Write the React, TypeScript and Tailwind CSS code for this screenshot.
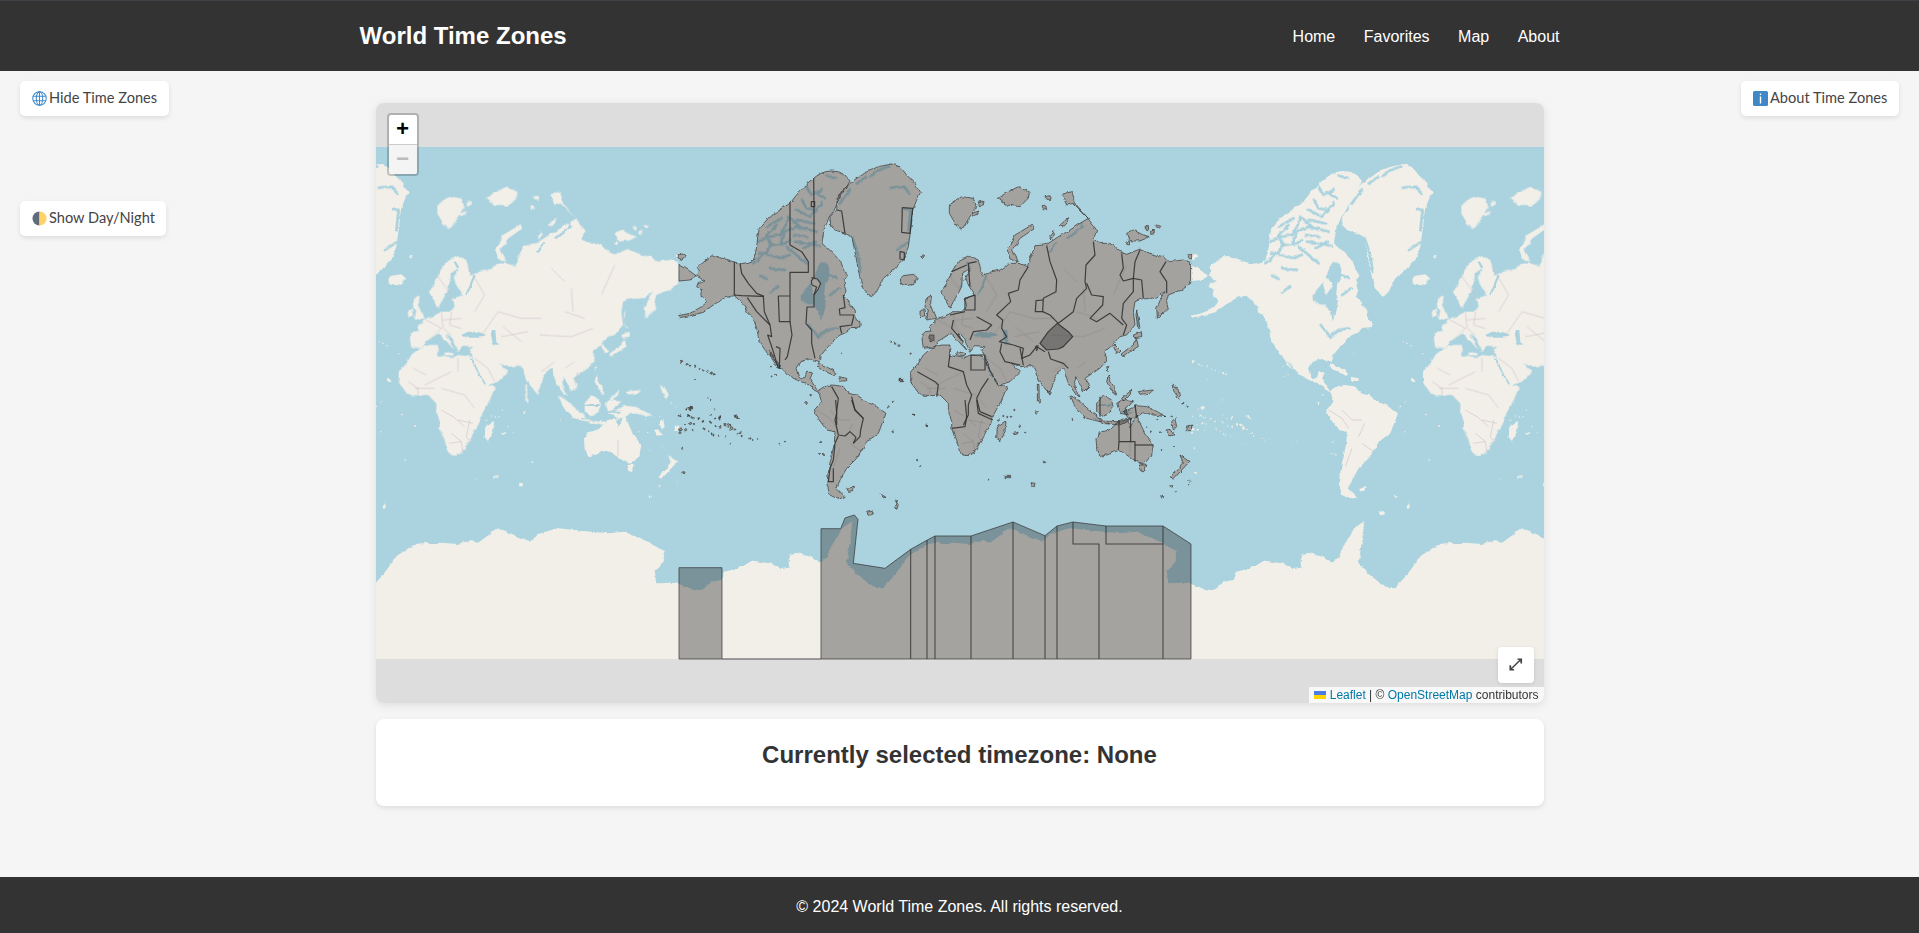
const T = {
  A: "translate(-9 8) scale(0.33333)",
  B: "translate(241 8) scale(0.33333)",
  C: "translate(-9 253) scale(0.33333)",
  D: "translate(241 253) scale(0.33333)",
};

const SHAPES_A = [
  "M82 338L105 318L128 300L148 308L170 313L192 320L215 326L235 322L250 316L258 290L262 255L268 220L285 200L310 178L340 158L360 145L378 122L392 105L412 85L432 68L455 54L480 48L505 50L525 60L540 78L528 100L512 122L500 150L490 170L478 185L470 205L462 225L456 262L472 278L492 298L512 320L520 340L533 360L522 378L528 408L522 425L540 445L555 465L558 490L570 500L570 516L545 518L530 532L510 540L495 552L470 580L450 605L448 622L440 618L420 612L390 620L378 640L388 668L405 668L410 652L428 652L420 672L438 700L445 708L470 692L490 690L520 695L535 715L560 720L590 740L620 755L648 775L625 835L590 860L560 910L530 940L510 975L500 1000L525 1025L505 1033L480 1020L470 985L478 935L493 865L495 830L470 825L440 785L433 765L455 740L445 712L432 705L412 686L385 676L355 660L335 640L312 610L292 595L268 560L260 520L250 490L232 470L218 445L193 422L165 428L130 450L100 472L70 480L28 488L25 482L60 475L95 455L112 440L92 420L95 405L80 395L85 382L105 378L78 362L90 350Z",
  "M540 85L580 55L625 35L665 27L690 35L710 60L735 85L752 112L740 135L728 165L725 200L720 240L715 275L700 315L670 345L640 370L620 410L605 425L590 415L575 390L565 345L555 290L545 245L525 235L495 225L482 215L480 185L500 165L502 130L520 105Z",
  "M27 328L55 345L78 362L60 375L27 378Z",
  "M688 372L700 362L730 358L742 368L735 385L712 392L692 388Z",
  "M25 300L40 297L46 304L35 313L25 310Z",
  "M445 625L470 635L500 655L490 660L465 650L445 635Z",
  "M505 665L530 670L530 678L510 678Z",
  "M300 585L310 605L330 640L318 630L302 605Z",
  "M752 305L764 302L760 312Z",
  "M688 670L698 670L698 680L688 680Z",
];

const SHAPES_B = [
  "M5 545L12 530L35 528L30 512L55 490L85 478L100 470L125 470L140 455L135 430L165 420L150 395L135 375L150 340L128 355L125 395L115 415L100 440L90 460L70 425L63 410L80 385L95 350L115 320L150 303L175 315L180 335L190 360L215 350L240 345L255 335L265 325L300 325L322 335L330 310L345 272L375 270L385 265L415 245L450 225L480 205L505 190L485 170L460 145L440 150L425 118L455 110L470 150L500 185L530 225L522 250L540 265L570 265L600 290L620 298L660 282L690 295L730 305L745 320L790 315L812 322L812 385L790 402L745 420L740 440L745 460L712 490L710 460L725 425L735 410L700 430L665 432L645 440L640 470L645 510L620 540L600 545L580 565L600 585L590 595L578 570L555 590L560 615L540 640L510 660L495 670L510 690L490 710L478 685L470 665L460 690L480 725L470 722L445 685L430 640L415 650L390 708L385 715L360 680L345 640L330 632L300 635L275 625L300 650L270 680L235 692L210 650L195 605L185 585L195 575L165 572L155 580L150 592L135 555L115 535L125 560L140 585L125 570L100 540L85 540L60 555L45 575L10 580Z",
  "M-28 650L-5 625L10 600L35 578L65 570L90 570L88 600L130 610L150 600L195 605L210 645L235 690L262 695L245 735L215 790L218 795L190 845L165 890L145 902L125 900L110 865L95 820L95 800L85 765L85 745L60 720L35 722L0 720L-28 682Z",
  "M18 430L35 420L32 445L50 490L20 495L25 465L15 460Z",
  "M0 465L15 465L18 485L0 488Z",
  "M88 150L125 125L160 130L170 155L150 185L125 225L105 205L88 175Z",
  "M175 140L192 138L190 150L178 152Z",
  "M155 175L180 168L170 182L158 184Z",
  "M232 130L265 110L295 95L328 110L325 130L300 155L260 150Z",
  "M335 210L342 222L300 250L278 285L295 320L270 312L262 285L285 240Z",
  "M375 125L390 122L390 133L378 133Z",
  "M366 155L378 153L380 164L370 165Z",
  "M418 212L445 188L447 198L430 216Z",
  "M390 245L402 230L403 240L392 252Z",
  "M620 235L640 225L670 240L690 245L660 258L640 258L625 255Z",
  "M675 215L686 215L684 224L676 222Z",
  "M692 228L700 226L700 238L692 238Z",
  "M708 208L722 214L718 220L708 215Z",
  "M620 260L630 260L628 270L620 268Z",
  "M805 300L816 298L814 312L805 310Z",
  "M382 706L394 712L390 720L383 716Z",
  "M352 688L357 688L358 745L352 742Z",
  "M600 600L625 580L640 570L650 550L655 575L630 590L612 605Z",
  "M640 540L665 530L665 545L645 548Z",
  "M650 465L660 520L653 520L648 480Z",
  "M560 635L567 635L564 650Z",
  "M565 660L578 690L590 722L580 715L570 700L560 680Z",
  "M450 720L480 740L505 762L540 790L540 800L500 790L470 765Z",
  "M540 798L595 800L640 790L600 810L545 805Z",
  "M530 745L550 720L575 735L580 760L550 785L530 770Z",
  "M590 745L605 735L640 740L615 760L625 780L600 775Z",
  "M612 770L650 752L680 755L738 785L700 780L670 772L645 790L625 790Z",
  "M605 730L635 705L630 720L612 738Z",
  "M655 710L700 705L690 715L660 718Z",
  "M760 685L775 705L780 735L770 725L760 705Z",
  "M112 590L135 595L130 605L110 602Z",
  "M30 540L42 540L42 560L30 560Z",
  "M345 575L355 575L350 585Z",
];

const SHAPES_D = [
  "M232 80L258 62L255 95L240 122L230 115Z",
  "M528 115L545 95L570 90L598 60L620 55L632 80L650 45L665 80L680 110L700 135L695 165L670 195L650 185L620 165L598 150L575 160L540 170L530 140Z",
  "M658 195L680 195L675 215L665 215Z",
  "M780 165L808 185L790 205L760 238L752 230L775 205L790 190Z",
  "M333 248L345 250L343 260L335 258Z",
  "M755 65L765 55L770 80L760 90Z",
  "M738 90L750 88L762 105L750 108Z",
  "M800 78L815 75L815 92L802 92Z",
  "M280 100L295 95L292 102L282 104Z",
  "M255 229L272 229L272 233L255 233Z",
];

const SHAPES_C = [
  "M530 264L550 262L548 272L535 274Z",
  "M590 334L606 330L610 342L598 346Z",
  "M632 282L648 292L640 293Z",
  "M675 300L685 315L680 328L676 320L682 312Z",
];

const DOTS: [number, number, number][] = [
  [35, 619, 3], [50, 628, 2], [60, 632, 2], [75, 635, 2], [88, 640, 2], [100, 646, 2], [112, 650, 2], [125, 653, 2], [131, 658, 2], [72, 672, 2],
  [112, 728, 1.5], [122, 735, 1.5], [60, 760, 3], [50, 762, 2], [58, 783, 2], [28, 785, 2], [70, 790, 2], [85, 792, 1.5], [100, 798, 1.5], [120, 800, 2], [135, 790, 2], [148, 790, 2], [195, 782, 2], [203, 787, 2],
  [408, 744, 4], [422, 720, 2.5], [692, 675, 5], [655, 758, 2.5], [670, 738, 1.5], [733, 780, 1.5], [722, 596, 2], [515, 596, 1.5], [662, 560, 1.5], [675, 566, 2], [685, 572, 2], [305, 664, 1.5], [318, 660, 2], [300, 635, 1.5],
];

const DOTS_C: [number, number, number][] = [
  [62, 25, 3], [50, 28, 2], [26, 48, 2], [57, 45, 2], [65, 52, 2], [87, 55, 2], [98, 65, 2], [122, 45, 1.5], [133, 28, 1.5], [148, 52, 2], [200, 48, 3],
  [30, 88, 4], [30, 98, 3], [45, 72, 2], [47, 92, 3], [62, 70, 3], [72, 72, 2], [68, 90, 1.5], [100, 85, 1.5], [115, 93, 2], [125, 100, 1.5], [137, 78, 2], [150, 82, 3], [165, 75, 3], [175, 78, 4], [185, 85, 4], [195, 90, 3], [210, 98, 3], [203, 102, 2], [215, 108, 2], [165, 112, 1.5], [145, 107, 1.5], [130, 104, 1.5],
  [238, 115, 2], [248, 120, 1.5], [263, 117, 1], [180, 131, 1.5], [328, 131, 1], [345, 125, 1.5], [35, 145, 3], [42, 218, 3], [453, 126, 2], [450, 162, 2], [459, 162, 2], [742, 180, 2.5], [752, 198, 1], [671, 95, 2], [771, 78, 2.5], [732, 43, 1.5],
];

const DOTS_D: [number, number, number][] = [
  [20, 77, 2], [283, 30, 2], [350, 35, 4], [235, 60, 3], [250, 48, 2], [262, 48, 2], [273, 50, 2], [299, 80, 2], [315, 95, 1.5], [375, 186, 2.5], [205, 236, 1.5], [725, 288, 3], [755, 260, 2.5], [765, 275, 1], [808, 245, 1.5], [808, 255, 1.5], [725, 150, 1.5], [762, 138, 2], [460, 60, 1.5], [493, 53, 2], [565, 70, 1.5], [680, 80, 2], [695, 95, 2], [722, 95, 2], [712, 60, 2], [755, 50, 2], [790, 8, 1.5], [800, 20, 1.5],
];

const WATER_STROKES = [
  "M250 325L285 295L305 270L345 265L360 255",
  "M305 270L290 240L320 210",
  "M330 265L345 230L380 215L440 230",
  "M362 190L390 215",
  "M380 165L420 185L455 145",
  "M445 115L465 130",
  "M470 62L500 70",
  "M300 340L345 345",
  "M270 362L290 372",
  "M300 412L325 395",
  "M416 510L445 545L470 525L500 520",
  "M660 98L700 95L718 115",
  "M560 85L590 65",
  "M605 62L625 45L655 35",
  "M548 250L565 300L572 350",
  "M705 165L722 165L715 228",
  "M680 285L715 262",
  "M400 280L440 260",
  "M370 240L410 245",
  "M510 145L540 100",
  "M265 260L300 245L330 240L345 215L355 185",
  "M268 295L300 300L335 310L360 300",
  "M350 275L380 300L410 325",
  "M375 260L420 265L450 275",
  "M395 135L410 160L440 165",
  "M380 195L430 205",
  "M290 215L335 190",
  "M410 95L425 120L455 105",
  "M460 345L500 370M480 420L510 400",
  "M445 450L452 490",
];

const TZ_A = [
  "M431 70L432 150L432 368L424 378L426 390L440 396L432 420L432 456L411 456L408 506L425 525L425 565L435 610",
  "M360 145L360 270L395 290L415 320L415 352L360 352L360 500L328 500L325 423L360 423",
  "M360 500L366 540L352 605L345 615",
  "M193 320L193 420L215 422L280 424L283 470L300 510L305 545L293 540L310 590L325 640",
  "M210 325L215 355L235 385L260 415L282 424",
  "M232 428L260 470L300 510",
  "M520 420L525 458L508 462L510 480L552 480L545 510L510 515L515 535",
  "M697 158L728 160L720 235L695 232Z",
  "M690 290L703 292L703 315L690 312Z",
  "M500 165L515 168L525 235",
  "M424 140L434 140L434 155L424 155Z",
  "M424 368L442 372L452 385L445 402L432 420",
  "M318 575L330 580L328 640",
  "M485 695L505 730L500 770L500 810",
  "M545 725L555 765L580 790",
];

const TZ_B = [
  "M380 272L390 320L410 375L408 410L370 430L368 470L346 470L348 437L368 435",
  "M368 470L390 480L415 505",
  "M520 260L525 300L498 330L495 380L500 400L470 430L460 470L415 505",
  "M605 295L610 340L600 360L610 378L640 370L640 410L610 445L605 490L620 510L610 540",
  "M660 285L645 320L640 370L665 375L670 430",
  "M738 320L720 350L740 380L740 415",
  "M500 385L515 420L550 425L548 450L510 490L530 500L570 475L610 510",
  "M325 335L300 375L295 405L265 415L272 440L230 480L248 495L245 520L260 545L238 560L280 570L310 580L305 610L330 600L350 575L375 590",
  "M385 590L392 612L430 625L445 640",
  "M170 320L145 325L150 395",
  "M165 420L135 430L135 465L165 465Z",
  "M170 485L215 510L200 525L160 530L150 555",
  "M95 350L140 330",
  "M245 565L240 590L255 620L300 630",
  "M300 580L305 605L310 630",
  "M-8 650L45 680L55 690L50 725",
  "M90 597L85 635L130 650L140 690L155 720L145 750L145 780L130 810",
  "M153 600L195 600L195 645L153 645Z",
  "M205 670L185 700L170 730L180 770L215 785",
  "M100 495L95 520L130 560",
  "M90 480L135 470",
  "M540 725L540 785",
  "M645 748L650 788",
];

const TZ_C = [
  "M497 0L500 40L495 60L505 105L525 108L540 95L558 112L550 130",
  "M545 0L555 30L580 55L572 90L570 110L550 130",
  "M505 108L495 130L490 180L480 205L475 245L490 245L490 205",
];

const TZ_D = [
  "M135 0L140 50L135 80L95 85",
  "M170 0L175 40L218 60",
  "M597 60L597 125L595 150",
  "M632 55L632 125",
  "M597 125L645 125L645 185",
  "M645 135L700 135",
];

const BORDERS_B = [
  "M55 495L100 520L70 550", "M100 470L105 520L130 540", "M130 470L125 510L160 520", "M105 495L160 490", "M90 365L130 420L115 440",
  "M215 550L270 470L340 490L400 490", "M280 545L360 530", "M285 515L340 560", "M395 540L490 545L555 520", "M470 470L530 490",
  "M150 610L150 650", "M130 650L50 690", "M15 640L55 660", "M20 700L80 700", "M200 610L240 640L260 680", "M100 700L170 720L200 760", "M0 680L30 700L30 720",
  "M180 335L230 420L200 470", "M620 330L580 420", "M430 340L470 380", "M400 650L440 620", "M470 640L500 620", "M500 690L510 650", "M490 400L495 470",
];
const BORDERS_C = ["M440 30L480 55L500 85", "M480 30L510 60L540 60", "M540 130L575 155", "M510 145L490 200", "M548 70L530 110"];
const BORDERS_D = ["M100 30L135 50L170 80", "M130 100L160 125L165 160", "M185 60L175 110L190 130", "M125 130L160 125", "M150 60L195 70", "M630 120L630 170"];

const TILE_ANTARCTICA_C = "M-12 548L27 552L60 565L95 572L125 545L155 540L165 515L200 505L250 482L300 490L330 505L355 500L358 462L385 458L420 470L450 485L470 470L490 430L510 395L530 375L548 362L540 420L530 490L570 530L610 560L640 562L670 530L720 465L770 432L795 430L810 428L810 810L-12 810Z";
const TILE_ANTARCTICA_D = "M60 430L100 428L150 432L190 420L210 428L270 385L290 395L330 410L370 425L385 405L410 395L450 385L500 390L550 395L600 400L650 395L720 425L770 455L765 490L740 510L745 550L790 548L816 552L816 810L60 810Z";

const ZONE_OUTLINE = "M453 386L512 386L525 354L553 345L564 358L550 490L645 505L722 448L772 420L795 408L903 408L1029 366L1125 407L1161 378L1209 366L1308 378L1479 378L1563 432L1563 777L453 777Z";
const ZONE_LEFT = "M27 503L156 503L156 777L27 777Z";
const ZONE_LINES = [
  "M722 448V777", "M771 420V777", "M795 408V777", "M903 408V777", "M1029 366V777", "M1125 407V777", "M1161 378V777",
  "M1209 366V432H1287V777", "M1308 378V432H1479", "M1479 378V777", "M156 777H453",
];

function Dots({ list }: { list: [number, number, number][] }) {
  return (
    <>
      {list.map(([x, y, r], i) => (
        <circle key={i} cx={x} cy={y} r={r} />
      ))}
    </>
  );
}

function WorldMap() {
  const copies = [-209, 303, 815];
  return (
    <svg viewBox="0 0 1168 600" className="absolute inset-0 h-full w-full">
      <defs>
        <clipPath id="tile-clip">
          <rect x="0" y="0" width="512.5" height="512" />
        </clipPath>
        <filter id="rough" x="-5%" y="-5%" width="110%" height="110%" filterUnits="objectBoundingBox">
          <feTurbulence type="fractalNoise" baseFrequency="0.16" numOctaves="3" seed="4" result="n" />
          <feDisplacementMap in="SourceGraphic" in2="n" scale="3.5" xChannelSelector="R" yChannelSelector="G" />
        </filter>
        <g id="world-shapes">
          <g transform={T.A}>
            {SHAPES_A.map((d, i) => <path key={i} d={d} />)}
            <Dots list={DOTS} />
          </g>
          <g transform={T.B}>
            {SHAPES_B.map((d, i) => <path key={i} d={d} />)}
          </g>
          <g transform={T.C}>
            {SHAPES_C.map((d, i) => <path key={i} d={d} />)}
            <Dots list={DOTS_C} />
          </g>
          <g transform={T.D}>
            {SHAPES_D.map((d, i) => <path key={i} d={d} />)}
            <Dots list={DOTS_D} />
          </g>
        </g>
        <g id="world-tile">
          <rect x="0" y="0" width="512.5" height="512" fill="#aad3df" />
          <g clipPath="url(#tile-clip)">
            <g filter="url(#rough)">
              <use href="#world-shapes" fill="#f2efe9" />
              <g transform={T.C} fill="#f2efe9"><path d={TILE_ANTARCTICA_C} /></g>
              <g transform={T.D} fill="#f2efe9"><path d={TILE_ANTARCTICA_D} /></g>
              <g transform={T.A} fill="none" stroke="#aad3df" strokeWidth="8" strokeLinejoin="round" strokeLinecap="round">
                {WATER_STROKES.map((d, i) => <path key={i} d={d} />)}
                <path fill="#aad3df" stroke="none" d="M392 418L415 392L428 375L440 345L455 320L475 330L482 360L466 385L462 420L468 450L460 485L445 470L430 452L405 445L392 435Z" />
                <path fill="#f2efe9" stroke="none" d="M424 368L442 372L452 385L445 402L432 420L424 395Z" />
              </g>
              <g transform={T.B}>
                <path fill="#aad3df" d="M160 540L180 530L210 530L235 540L210 548L170 548Z" />
                <path fill="#aad3df" d="M248 525L262 525L265 560L270 570L255 568L250 545Z" />
                <path fill="none" stroke="#aad3df" strokeWidth="5" d="M190 610L212 655L232 688" />
                <path fill="none" stroke="#aad3df" strokeWidth="6" d="M140 320L150 340M120 400L135 370M540 700L575 730M520 790L580 790M590 690L610 700M470 720L530 770M530 750L575 750M575 770L640 770M470 180L490 215L440 250M410 262L385 290M200 360L175 420" />
                <path fill="#aad3df" d="M650 445L700 435L712 470L695 500L660 525L648 500L655 465Z" />
              </g>
            </g>
            <g transform={T.B} fill="none" stroke="#cdbfc8" strokeWidth="1.8">
              {BORDERS_B.map((d, i) => <path key={i} d={d} />)}
            </g>
            <g transform={T.C} fill="none" stroke="#cdbfc8" strokeWidth="1.8">
              {BORDERS_C.map((d, i) => <path key={i} d={d} />)}
            </g>
            <g transform={T.D} fill="none" stroke="#cdbfc8" strokeWidth="1.8">
              {BORDERS_D.map((d, i) => <path key={i} d={d} />)}
            </g>
          </g>
        </g>
      </defs>
      {copies.map((x) => (
        <use key={x} href="#world-tile" x={x} y={44} />
      ))}
      <g transform="translate(303 44)" strokeLinejoin="round">
        <g filter="url(#rough)">
          <use href="#world-shapes" fill="#333333" fillOpacity="0.4" stroke="#333333" strokeOpacity="0.75" strokeWidth="2.8" />
        </g>
        <g transform={T.C} fill="#333333" fillOpacity="0.4" stroke="#333333" strokeOpacity="0.7" strokeWidth="3">
          <path d={ZONE_OUTLINE} />
          <path d={ZONE_LEFT} />
        </g>
        <g transform={T.C} fill="none" stroke="#333333" strokeOpacity="0.85" strokeWidth="3.2">
          {ZONE_LINES.map((d, i) => <path key={i} d={d} />)}
        </g>
        <g transform={T.A} fill="none" stroke="#333333" strokeOpacity="0.9" strokeWidth="3.6">
          {TZ_A.map((d, i) => <path key={i} d={d} />)}
        </g>
        <g transform={T.B} fill="none" stroke="#333333" strokeOpacity="0.9" strokeWidth="3.6">
          {TZ_B.map((d, i) => <path key={i} d={d} />)}
          <path d="M412 505L445 530L458 545L430 575L415 582L380 585L360 565L385 530Z" fill="#333333" fillOpacity="0.4" />
        </g>
        <g transform={T.C} fill="none" stroke="#333333" strokeOpacity="0.9" strokeWidth="3.6">
          {TZ_C.map((d, i) => <path key={i} d={d} />)}
        </g>
        <g transform={T.D} fill="none" stroke="#333333" strokeOpacity="0.9" strokeWidth="3.6">
          {TZ_D.map((d, i) => <path key={i} d={d} />)}
        </g>
      </g>
    </svg>
  );
}

function Globe() {
  return (
    <svg viewBox="0 0 16 16" className="h-[15px] w-[15px] shrink-0" fill="none" stroke="#3f8bcb" strokeWidth="1.1">
      <circle cx="8" cy="8" r="7.2" />
      <ellipse cx="8" cy="8" rx="3.4" ry="7.2" />
      <path d="M8 .8v14.4M1.2 5.5h13.6M1.2 10.5h13.6" />
    </svg>
  );
}

function HalfMoon() {
  return (
    <svg viewBox="0 0 16 16" className="h-[15px] w-[15px] shrink-0">
      <path d="M8 .5a7.5 7.5 0 0 0 0 15z" fill="#5f6b7a" />
      <path d="M8 .5a7.5 7.5 0 0 1 0 15z" fill="#ffd266" />
    </svg>
  );
}

function InfoIcon() {
  return (
    <svg viewBox="0 0 15 15" className="h-[15px] w-[15px] shrink-0">
      <rect width="15" height="15" rx="1.5" fill="#3f88c5" />
      <rect x="6.8" y="2.5" width="1.4" height="1.6" fill="#fff" />
      <rect x="6.8" y="5.5" width="1.4" height="7" fill="#fff" />
    </svg>
  );
}

const btn =
  "absolute z-10 flex h-[35px] items-center gap-[2px] whitespace-nowrap rounded-[5px] bg-white px-3 text-[14.6px] leading-none text-[#444] shadow-[0_2px_5px_rgba(0,0,0,0.1)] font-['Lato',sans-serif]";

export default function App() {
  return (
    <div className="relative flex h-[933px] flex-col overflow-hidden bg-[#f5f5f5] font-['Liberation_Sans',Arial,sans-serif] text-[#333]">
      <header className="h-[71px] shrink-0 border-t border-t-[#3f3f46] bg-[#333] text-white">
        <div className="mx-auto flex h-[70px] w-[1200px] items-center justify-between">
          <h1 className="text-[24px] font-bold leading-none">World Time Zones</h1>
          <nav className="flex gap-[28.5px] pt-[2px] text-[16px]">
            <span>Home</span>
            <span>Favorites</span>
            <span>Map</span>
            <span>About</span>
          </nav>
        </div>
      </header>

      <button className={`${btn} left-5 top-[81px] w-[149px]`}>
        <Globe />
        <span>Hide Time Zones</span>
      </button>
      <button className={`${btn} left-5 top-[201px] w-[146px]`}>
        <HalfMoon />
        <span>Show Day/Night</span>
      </button>
      <button className={`${btn} right-5 top-[81px] w-[158px]`}>
        <InfoIcon />
        <span>About Time Zones</span>
      </button>

      <main className="mx-auto flex h-[806px] w-[1168px] shrink-0 flex-col gap-4 pt-8">
        <div className="relative h-[600px] shrink-0 overflow-hidden rounded-lg bg-[#ddd] shadow-[0_2px_10px_rgba(0,0,0,0.1)]">
          <WorldMap />
          <div className="absolute left-[11px] top-[10px] flex w-[32px] flex-col overflow-hidden rounded-[4px] border-2 border-[rgba(0,0,0,0.2)] bg-clip-padding">
            <div className="flex h-[30px] items-center justify-center rounded-t-[2px] border-b border-b-[#ccc] bg-white pt-[3px] font-['Liberation_Mono',monospace] text-[22px] font-bold leading-none text-black">+</div>
            <div className="flex h-[29px] items-center justify-center bg-[#f4f4f4] pt-[2px] font-['Liberation_Mono',monospace] text-[22px] font-bold leading-none text-[#bbb]">−</div>
          </div>
          <div className="absolute right-[10px] top-[544px] flex h-9 w-9 items-center justify-center rounded-[4px] bg-white font-['DejaVu_Sans',sans-serif] text-[16px] font-bold text-[#444] shadow-[0_1px_4px_rgba(0,0,0,0.1)]">⤢</div>
          <div className="absolute bottom-0 right-0 h-4 whitespace-nowrap bg-[rgba(255,255,255,0.8)] px-[5px] text-[12px] leading-4 text-[#333]">
            <svg viewBox="0 0 12 8" className="inline h-2 w-3 align-baseline">
              <rect width="12" height="4" fill="#4c7be1" />
              <rect y="4" width="12" height="4" fill="#ffd500" />
            </svg>{" "}
            <span className="text-[#0078a8]">Leaflet</span> | © <span className="text-[#0078a8]">OpenStreetMap</span> contributors
          </div>
        </div>
        <div className="h-[87px] shrink-0 rounded-lg bg-white pt-[21px] text-center shadow-[0_2px_5px_rgba(0,0,0,0.1)]">
          <h2 className="text-[24px] font-bold leading-[30px]">Currently selected timezone: None</h2>
        </div>
      </main>

      <footer className="flex h-[60px] shrink-0 items-center justify-center bg-[#333] text-[16px] text-white">
        © 2024 World Time Zones. All rights reserved.
      </footer>
    </div>
  );
}
